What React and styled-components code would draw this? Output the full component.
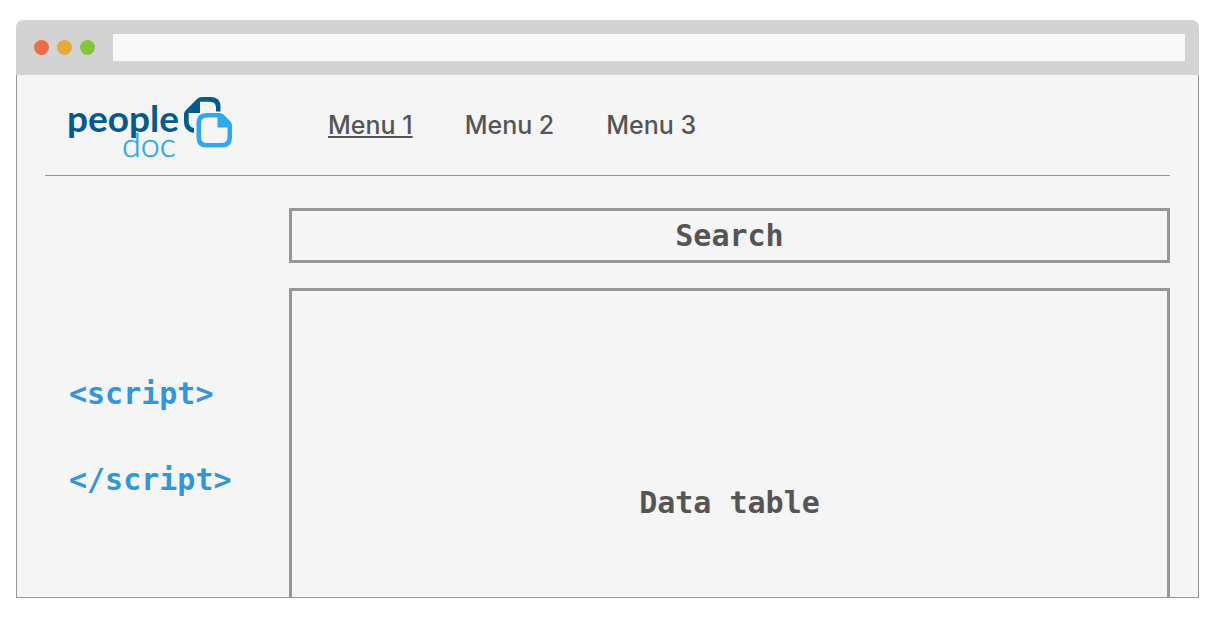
import React from "react";
import styled, { createGlobalStyle } from "styled-components";

const GlobalStyle = createGlobalStyle`
  * { box-sizing: border-box; }
  body { margin: 0; background: #ffffff; }
`;

const Page = styled.div`
  display: flex;
  height: 100vh;
  padding: 20px 15px 19px 16px;
`;

const BrowserWindow = styled.div`
  display: flex;
  flex: 1;
  flex-direction: column;
  min-width: 0;
  overflow: hidden;
  border-radius: 7px 7px 0 0;
`;

const TitleBar = styled.div`
  display: flex;
  align-items: center;
  gap: 18px;
  padding: 14px 14px 14px 18px;
  background: #d3d3d3;
`;

const Lights = styled.div`
  display: flex;
  gap: 8px;
`;

const Light = styled.span`
  width: 15px;
  height: 15px;
  border-radius: 50%;
  background: ${({ $color }) => $color};
`;

const AddressBar = styled.input`
  flex: 1;
  min-width: 0;
  height: 27px;
  padding: 0 8px;
  border: 0;
  border-radius: 0;
  outline: 0;
  background: #f8f8f8;
  color: #555555;
  font: 14px "Liberation Sans", sans-serif;
`;

const Viewport = styled.div`
  flex: 1;
  min-height: 0;
  overflow: hidden;
  padding: 0 28px;
  border: 1px solid #969696;
  border-top: 0;
  background: #f5f5f5;
`;

const Header = styled.header`
  display: flex;
  align-items: center;
  gap: 96px;
  padding: 22px 23px 18px;
  border-bottom: 1px solid #969696;
`;

const LogoSvg = styled.svg`
  display: block;
  flex: none;
  overflow: visible;
  font-family: Lato, sans-serif;
`;

const Nav = styled.nav`
  display: flex;
  gap: 52px;
  padding-bottom: 4px;
`;

const NavLink = styled.a`
  color: #555555;
  font: 500 25px/32px Inter, sans-serif;
  white-space: nowrap;
  text-decoration: ${({ $active }) => ($active ? "underline" : "none")};
  text-decoration-thickness: 2px;
  text-underline-offset: 2px;
`;

const Content = styled.div`
  display: flex;
  padding-top: 32px;
`;

const Sidebar = styled.aside`
  display: flex;
  flex: none;
  flex-direction: column;
  gap: 46px;
  width: 244px;
  padding: 166px 24px 0;
`;

const Tag = styled.code`
  color: #3296d7;
  font: bold 30px/40px "DejaVu Sans Mono", monospace;
  white-space: nowrap;
`;

const Main = styled.main`
  display: flex;
  flex: 1;
  flex-direction: column;
  gap: 25px;
  min-width: 0;
`;

const Panel = styled.section`
  display: flex;
  align-items: center;
  justify-content: center;
  min-height: ${({ $tall }) => ($tall ? "430px" : "55px")};
  border: 3px solid #969696;
`;

const PanelTitle = styled.h2`
  margin: 0;
  color: #555555;
  font: bold 30px/40px "DejaVu Sans Mono", monospace;
`;

function Logo() {
  return (
    <LogoSvg width="164" height="60" viewBox="0 0 164 60" role="img" aria-label="people doc">
      <text x="-1" y="35" fontSize="37" fontWeight="700" fill="#045a8a">people</text>
      <text x="54" y="60" fontSize="34" fontWeight="300" fill="#30a7ef" stroke="#30a7ef" strokeWidth="0.5">doc</text>
      <path
        fill="#045a8a"
        d="M116 17Q116 15 118 13L129 2Q131 0 134 0H143Q152.5 0 152.5 10V14.5H148V11Q148 4.7 142 4.7H132V16H120.7V24Q120.7 30 126 31.2V35.8Q116 34.5 116 25Z"
      />
      <path
        fill="#30a7ef"
        fillRule="evenodd"
        d="M138.500 16H152Q154 16 155.500 17.500L162.500 24.500Q164 26 164 28V40.500Q164 50.500 154 50.500H138.500Q128.500 50.500 128.500 40.500V26Q128.500 16 138.500 16ZM139 20.500Q133 20.500 133 26.500V40Q133 46 139 46H153.500Q159.500 46 159.500 40V30.500H149.500V20.500Z"
      />
    </LogoSvg>
  );
}

const lights = ["#eb6e4b", "#e6aa37", "#87c43c"];
const menus = ["Menu 1", "Menu 2", "Menu 3"];

export default function App() {
  return (
    <>
      <GlobalStyle />
      <Page>
        <BrowserWindow>
          <TitleBar>
            <Lights>
              {lights.map((color) => (
                <Light key={color} $color={color} />
              ))}
            </Lights>
            <AddressBar type="text" aria-label="Address" />
          </TitleBar>
          <Viewport>
            <Header>
              <Logo />
              <Nav>
                {menus.map((menu, i) => (
                  <NavLink key={menu} href="#" $active={i === 0}>{menu}</NavLink>
                ))}
              </Nav>
            </Header>
            <Content>
              <Sidebar>
                <Tag>{"<script>"}</Tag>
                <Tag>{"</script>"}</Tag>
              </Sidebar>
              <Main>
                <Panel><PanelTitle>Search</PanelTitle></Panel>
                <Panel $tall><PanelTitle>Data table</PanelTitle></Panel>
              </Main>
            </Content>
          </Viewport>
        </BrowserWindow>
      </Page>
    </>
  );
}
